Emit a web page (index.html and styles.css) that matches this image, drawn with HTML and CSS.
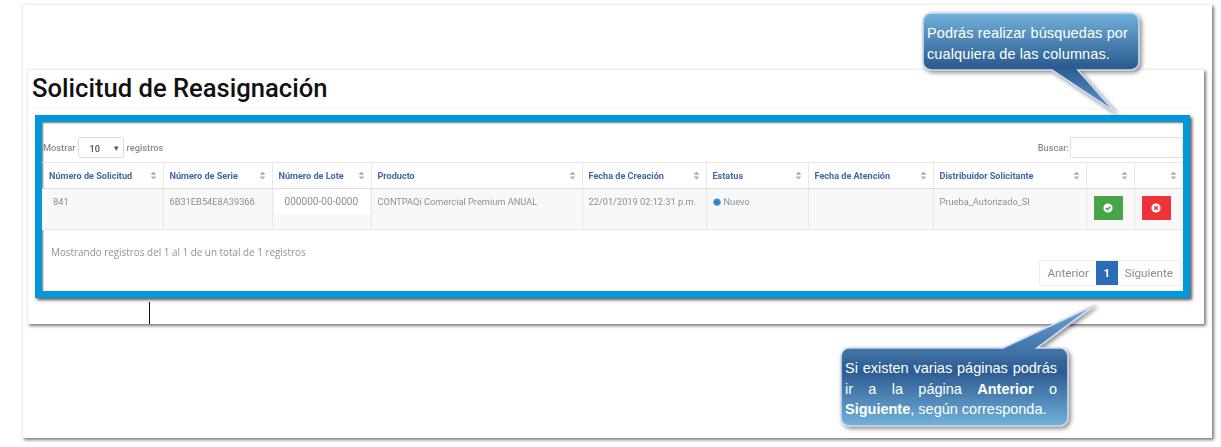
FILE: index.html
```html
<!DOCTYPE html>
<html lang="es">
<head>
<meta charset="utf-8">
<title>Solicitud de Reasignación</title>
<link rel="stylesheet" href="styles.css">
</head>
<body>
<svg class="defs" width="0" height="0" aria-hidden="true">
  <defs>
    <symbol id="sort" viewBox="0 0 8 10"><path d="M4 0.5 7.4 4H.6zM4 9.5 .6 6h6.8z" fill="#a9adb3"/></symbol>
    <linearGradient id="g1" gradientUnits="userSpaceOnUse" x1="0" y1="3" x2="0" y2="102">
      <stop offset="0" stop-color="#72b2da"/><stop offset=".55" stop-color="#2b5b90"/><stop offset="1" stop-color="#5f9ac8"/>
    </linearGradient>
    <linearGradient id="g2" gradientUnits="userSpaceOnUse" x1="0" y1="3" x2="0" y2="124">
      <stop offset="0" stop-color="#6ba8d4"/><stop offset=".55" stop-color="#2c5b91"/><stop offset="1" stop-color="#72b2da"/>
    </linearGradient>
  </defs>
</svg>

<main class="paper">
  <section class="card">
    <h1 class="title">Solicitud de Reasignación</h1>
    <div class="frame">
      <div class="toolbar">
        <div class="length">
          <span>Mostrar</span>
          <div class="select"><span>10</span><span class="caret">▾</span></div>
          <span>registros</span>
        </div>
        <div class="search">
          <span>Buscar:</span>
          <div class="input"></div>
        </div>
      </div>
      <table class="grid">
        <thead>
          <tr>
            <th class="c1"><div class="th"><span>Número de Solicitud</span><svg class="sort"><use href="#sort"/></svg></div></th>
            <th class="c2"><div class="th"><span>Número de Serie</span><svg class="sort"><use href="#sort"/></svg></div></th>
            <th class="c3"><div class="th"><span>Número de Lote</span><svg class="sort"><use href="#sort"/></svg></div></th>
            <th class="c4"><div class="th"><span>Producto</span><svg class="sort"><use href="#sort"/></svg></div></th>
            <th class="c5"><div class="th"><span>Fecha de Creación</span><svg class="sort"><use href="#sort"/></svg></div></th>
            <th class="c6"><div class="th"><span>Estatus</span><svg class="sort"><use href="#sort"/></svg></div></th>
            <th class="c7"><div class="th"><span>Fecha de Atención</span><svg class="sort"><use href="#sort"/></svg></div></th>
            <th class="c8"><div class="th"><span>Distribuidor Solicitante</span><svg class="sort"><use href="#sort"/></svg></div></th>
            <th class="c9"><div class="th th-end"><svg class="sort"><use href="#sort"/></svg></div></th>
            <th class="c10"><div class="th th-end"><svg class="sort"><use href="#sort"/></svg></div></th>
          </tr>
        </thead>
        <tbody>
          <tr>
            <td class="first">841</td>
            <td>6B31EB54E8A39366</td>
            <td class="lote-cell"><div class="lote">000000-00-0000</div></td>
            <td>CONTPAQi Comercial Premium ANUAL</td>
            <td>22/01/2019 02:12:31 p.m.</td>
            <td><span class="status"><svg class="burst" viewBox="0 0 10 10"><path d="M5 0 6.1 1.7 8 1 8.3 3 10 3.9 9 5.5 10 7 8.2 7.6 7.9 9.5 6 9 5 10 3.9 9 2 9.5 1.8 7.6 0 7 1 5.5 0 3.9 1.7 3 2 1 3.9 1.7z" fill="#2f86cc"/></svg>Nuevo</span></td>
            <td></td>
            <td>Prueba_Autorizado_SI</td>
            <td class="action"><div class="btn btn-ok"><svg viewBox="0 0 10 10"><circle cx="5" cy="5" r="4.6" fill="#fff"/><path d="M2.9 5.1 4.4 6.6 7.2 3.8" fill="none" stroke="#47a447" stroke-width="1.5"/></svg></div></td>
            <td class="action"><div class="btn btn-no"><svg viewBox="0 0 10 10"><circle cx="5" cy="5" r="4.6" fill="#fff"/><path d="M3.3 3.3 6.7 6.7M6.7 3.3 3.3 6.7" fill="none" stroke="#ee3338" stroke-width="1.5"/></svg></div></td>
          </tr>
        </tbody>
      </table>
      <div class="foot">
        <p class="info">Mostrando registros del 1 al 1 de un total de 1 registros</p>
        <nav class="pager">
          <span class="page">Anterior</span>
          <span class="page current">1</span>
          <span class="page">Siguiente</span>
        </nav>
      </div>
    </div>
  </section>
</main>

<div class="cursor"></div>

<aside class="callout callout-top">
  <svg class="bubble" width="225" height="106" viewBox="0 0 225 106"><path d="M11 3H211a8 8 0 0 1 8 8V52a8 8 0 0 1-8 8H158L195 102 132 60H11a8 8 0 0 1-8-8V11a8 8 0 0 1 8-8z" fill="url(#g1)" stroke="#d3daf3" stroke-width="1.6"/></svg>
  <p class="callout-text">Podrás realizar búsquedas por cualquiera de las columnas.</p>
</aside>

<aside class="callout callout-bottom">
  <svg class="bubble" width="260" height="128" viewBox="0 0 260 128"><path d="M11 46H165L257 3 199 46H222a8 8 0 0 1 8 8V116a8 8 0 0 1-8 8H11a8 8 0 0 1-8-8V54a8 8 0 0 1 8-8z" fill="url(#g2)" stroke="#d3daf3" stroke-width="1.6"/></svg>
  <p class="callout-text">Si existen varias páginas podrás ir a la página <b>Anterior</b> o <b>Siguiente</b>, según corresponda.</p>
</aside>
</body>
</html>
```
FILE: styles.css
```css
* { box-sizing: border-box; }
html, body { margin: 0; height: 100%; overflow: hidden; }
body { background: #fff; font-family: Roboto, "Liberation Sans", sans-serif; }
.defs { position: absolute; }

.paper {
  width: 1190px;
  height: 434px;
  margin: 4px 0 0 22px;
  padding: 64px 8px 0 4px;
  background: #fff;
  border-top: 1px solid #eee;
  border-left: 1px solid #eee;
  box-shadow: 2px 2px 3px #7c7c7c;
}
.card {
  width: 1177px;
  height: 255px;
  padding: 0 0 0 7px;
  background: #fff;
  border-top: 1px solid #eee;
  border-left: 1px solid #eee;
  box-shadow: 2px 2px 3px #7c7c7c;
}
.title {
  width: 1160px;
  margin: 0 0 6px -3px;
  height: 39px;
  padding-top: 3px;
  border-bottom: 1px solid #f3f3f3;
  font-size: 25.6px;
  line-height: 31px;
  font-weight: 500;
  color: #111;
}
.frame {
  width: 1155px;
  height: 183px;
  border: 7px solid #0498da;
  background: #fff;
  box-shadow: 2px 2px 3px #555, inset 1px 1px 2px #777;
  font-size: 9.25px;
  color: #8a8f99;
}
.toolbar, .grid, .foot { filter: blur(.3px); }
.toolbar {
  display: flex;
  justify-content: space-between;
  align-items: center;
  margin: 15px 0 4px;
  height: 21px;
}
.length, .search { display: flex; align-items: center; font-weight: 500; color: #858c99; }
.length { gap: 3px; margin-left: 1px; }
.select {
  display: flex;
  justify-content: space-between;
  align-items: center;
  width: 46px;
  height: 21px;
  margin-left: -1px;
  padding: 1px 4px 0 11px;
  border: 1px solid #ddd;
  border-radius: 2px;
  color: #555;
}
.caret { font-size: 9px; }
.search { gap: 1px; }
.input { width: 113px; height: 21px; border: 1px solid #e2e2e2; }

.grid {
  width: 1141px;
  table-layout: fixed;
  border-collapse: collapse;
  font-size: 9.25px;
}
.c1 { width: 121px; } .c2 { width: 109px; } .c3 { width: 99px; } .c4 { width: 211px; }
.c5 { width: 124px; } .c6 { width: 102px; } .c7 { width: 125px; } .c8 { width: 153px; }
.c9 { width: 48px; } .c10 { width: 49px; }
.grid th {
  height: 26px;
  padding: 0 6px;
  border-top: 1px solid #e8e8e8;
  border-bottom: 1px solid #ddd;
  border-left: 1px solid #e8e8e8;
  font-size: 9.1px;
  font-weight: 700;
  text-align: left;
  color: #3f68a5;
}
.grid th:first-child, .grid td:first-child { border-left: 0; }
.grid th:first-child { padding-left: 7px; }
.th { display: flex; justify-content: space-between; align-items: center; }
.th-end { justify-content: flex-end; }
.sort { width: 7px; height: 9px; flex: none; margin-bottom: 1px; }
.grid td {
  height: 41px;
  padding: 7px 6px 0;
  vertical-align: top;
  border-left: 1px solid #e8e8e8;
  border-bottom: 1px solid #e8e8e8;
  background: #f8f8f8;
  color: #8b8f96;
  line-height: 11px;
  white-space: nowrap;
}
.grid td.first { padding-left: 11px; }
.grid td.lote-cell { padding: 0 1px; }
.lote {
  height: 25px;
  padding: 7px 0 0 11px;
  background: #fff;
  font-size: 10.1px;
}
.status { display: inline-flex; align-items: center; gap: 3px; }
.burst { width: 8px; height: 8px; }
.grid td.action { padding: 7px 0 0 7px; }
.btn {
  display: flex;
  align-items: center;
  justify-content: center;
  width: 29px;
  height: 24px;
}
.btn svg { width: 10px; height: 10px; }
.btn-ok { background: #47a447; }
.btn-no { background: #ee3338; }

.foot { display: flex; justify-content: space-between; height: 61px; }
.info {
  margin: 16px 0 0 9px;
  font-family: "Open Sans", sans-serif;
  font-size: 9.9px;
  line-height: 13px;
  color: #8a93a3;
}
.pager {
  display: flex;
  align-self: flex-end;
  height: 26px;
  margin: 0 2px 5px 0;
  border: 1px solid #eee;
  border-radius: 2px;
  font-size: 11.7px;
  line-height: 24px;
  color: #8a8a8a;
}
.page { padding: 0 7px; }
.page.current { padding: 0 7.5px; background: #2b6cb5; color: #fff; font-weight: 700; }

/* Mouse text cursor caught in the capture */
.cursor { position: absolute; left: 149px; top: 302px; width: 1px; height: 22px; background: #111; }

/* Annotation balloons laid over the screenshot */
.callout { position: absolute; }
.callout-top { left: 920px; top: 10px; width: 225px; height: 106px; }
.callout-bottom { left: 838px; top: 302px; width: 260px; height: 128px; }
.bubble { position: absolute; inset: 0; filter: drop-shadow(2px 2px 2px rgba(0,0,0,.45)); }
.callout-text {
  position: relative;
  margin: 0;
  font-family: "Liberation Sans", Arial, sans-serif;
  font-size: 14.5px;
  color: #fff;
}
.callout-top .callout-text { padding: 13px 0 0 7px; width: 215px; line-height: 21px; letter-spacing: .12px; }
.callout-bottom .callout-text { padding: 56px 0 0 7px; width: 219px; line-height: 20.5px; text-align: justify; }
```
